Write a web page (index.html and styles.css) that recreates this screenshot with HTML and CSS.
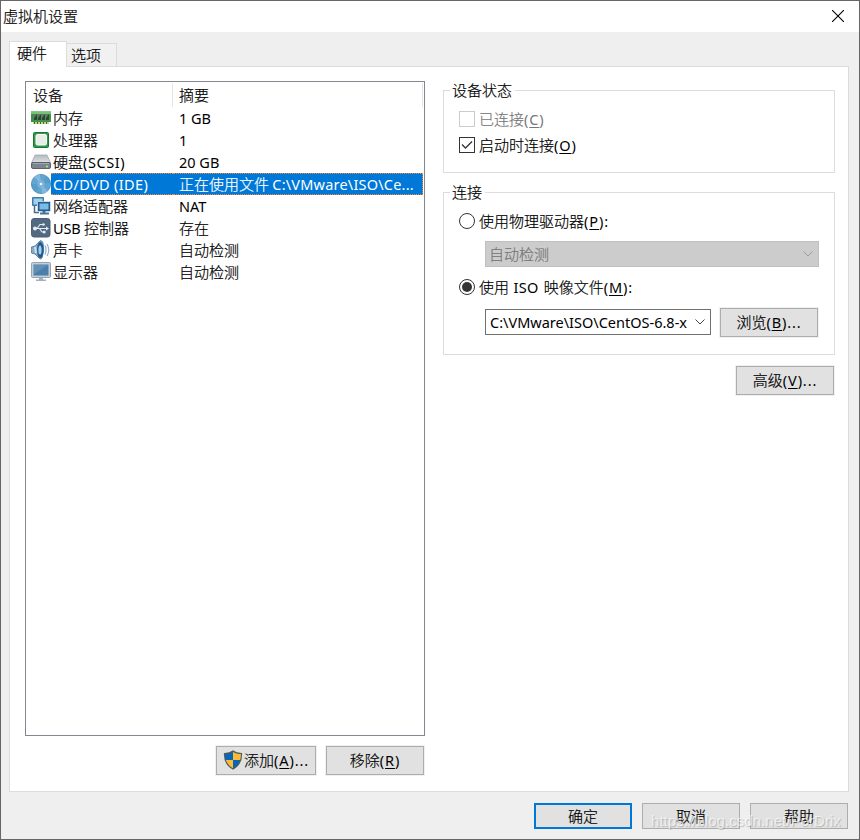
FILE: index.html
```
<!DOCTYPE html>
<html lang="zh-CN">
<head>
<meta charset="utf-8">
<title>虚拟机设置</title>
<link rel="stylesheet" href="styles.css">
</head>
<body>
<div class="window">
  <header class="titlebar">
    <span class="title">虚拟机设置</span>
    <svg class="close" width="12" height="12" viewBox="0 0 12 12"><path d="M0 0L12 12M12 0L0 12" stroke="#000" stroke-width="1.1"/></svg>
  </header>
  <nav class="tabs">
    <div class="tab active">硬件</div>
    <div class="tab">选项</div>
  </nav>
  <main class="panel">
    <section class="left">
      <div class="list">
        <div class="list-head"><span class="head-device">设备</span><span class="head-summary">摘要</span></div>
        <div class="row">
          <svg class="icon" viewBox="0 0 20 20"><path d="M0 3.500H20V14H18V16H2V14H0Z" fill="#3d9247"/><path d="M0 3.500H20V6H0Z" fill="#74c274"/><path d="M2 14H18V16H2Z" fill="#cfd08a"/><path d="M3.500 14V16M6.500 14V16M9.500 14V16M12.500 14V16M15.500 14V16" stroke="#28752d"/><path d="M3 6H6V12H3ZM7 6H10V12H7ZM11 6H14V12H11ZM15 6H18V12H15Z" fill="#35403c"/><path d="M3 6H6L3 10ZM7 6H10L7 10ZM11 6H14L11 10ZM15 6H18L15 10Z" fill="#66756c"/></svg>
          <span class="name">内存</span><span class="summary"><span class="lat">1 GB</span></span>
        </div>
        <div class="row">
          <svg class="icon" viewBox="0 0 20 20"><rect x="2.500" y="2.500" width="15" height="15" rx="1" fill="#32994a" stroke="#197735"/><rect x="5" y="4.500" width="10.500" height="10.500" rx="1.500" fill="#e9ece8" stroke="#fafffa"/></svg>
          <span class="name">处理器</span><span class="summary"><span class="lat">1</span></span>
        </div>
        <div class="row">
          <svg class="icon" viewBox="0 0 20 20"><defs><linearGradient id="disk" x2="0" y2="1"><stop stop-color="#b4bac0"/><stop offset="1" stop-color="#dfe2e5"/></linearGradient></defs><path d="M4 3H16L19.500 11H.5Z" fill="url(#disk)" stroke="#a1a8af" stroke-width=".8"/><rect x=".5" y="10.500" width="19" height="6" rx="1.500" fill="#7c848d" stroke="#59626b"/><path d="M2 11.500H18" stroke="#a0a7af"/><path d="M15 14.500H17" stroke="#a9f06b" stroke-width="1.500"/></svg>
          <span class="name">硬盘<span class="lat wide">(SCSI)</span></span><span class="summary"><span class="lat">20 GB</span></span>
        </div>
        <div class="row selected">
          <svg class="icon" viewBox="0 0 20 20"><circle cx="10" cy="10" r="9.600" fill="#62a5d2" stroke="#4489bc" stroke-width=".8"/><path d="M10 10L3 3A10 10 0 0 1 9 .5ZM10 10L17 17A10 10 0 0 1 11 19.500Z" fill="#8fc0df" opacity=".7"/><path d="M10 10L0 10A10 10 0 0 0 5 18ZM10 10L20 9A10 10 0 0 0 15 2Z" fill="#3c8ac0" opacity=".3"/><circle cx="10" cy="10" r="3.300" fill="#73afd6" stroke="#8fbfdd" stroke-width=".6"/><circle cx="10" cy="10" r="1.300" fill="#eef8fd"/></svg>
          <span class="name"><span class="lat device">CD/DVD (IDE)</span></span><span class="summary">正在使用文件 <span class="lat path-short">C:\VMware\ISO\Ce...</span></span>
        </div>
        <div class="row">
          <svg class="icon" viewBox="0 0 20 20"><rect x="1" y="1" width="12" height="9" rx="1" fill="#3d7cae"/><rect x="2.500" y="2.500" width="9" height="6" fill="#a1d1ed"/><path d="M3.500 10V16.500H8" fill="none" stroke="#476b87" stroke-width="1.500"/><rect x="6.500" y="5.500" width="13" height="10" rx="1" fill="#255d8f" stroke="#dfeefa" stroke-width=".7"/><rect x="8.500" y="7.500" width="9" height="6" fill="#79bce5"/><path d="M9 17.500H18" stroke="#477694" stroke-width="2"/><path d="M13 15V17" stroke="#477694" stroke-width="3"/></svg>
          <span class="name">网络适配器</span><span class="summary"><span class="lat">NAT</span></span>
        </div>
        <div class="row">
          <svg class="icon" viewBox="0 0 20 20"><rect x=".5" y=".5" width="18.500" height="18.500" rx="2.500" fill="#526982" stroke="#4a617b"/><path d="M3 10.500H16M6 10.500L9 6.500H12M8.500 10.500L11 14H13" fill="none" stroke="#e6edf3" stroke-width="1.100"/><circle cx="4" cy="10.500" r="2" fill="#e6edf3"/><path d="M15 8.500L18 10.500L15 12.500Z" fill="#e6edf3"/><circle cx="12.500" cy="6.500" r="1.300" fill="#e6edf3"/><rect x="12" y="12.800" width="2.500" height="2.500" fill="#e6edf3"/></svg>
          <span class="name"><span class="lat usb">USB</span> 控制器</span><span class="summary">存在</span>
        </div>
        <div class="row">
          <svg class="icon" viewBox="0 0 20 20"><path d="M.5 7L4 6L9 .8Q11 0 12 3Q14 10 11 18Q10 20 8 18L4 14L.5 13Q-.5 10 .5 7Z" fill="#88abc7" stroke="#456f93" stroke-width=".8"/><ellipse cx="9.300" cy="10" rx="3.200" ry="8" fill="#215a8d"/><ellipse cx="9" cy="10" rx="1.600" ry="4.500" fill="#9ed0ef"/><path d="M4 7L5 13" stroke="#cfe1ef" stroke-width="2"/><path d="M14 5.500Q16 10 14 14.500M16 4Q19.500 10 16 16" fill="none" stroke="#91b3cc" stroke-width="1.200"/></svg>
          <span class="name">声卡</span><span class="summary">自动检测</span>
        </div>
        <div class="row">
          <svg class="icon" viewBox="0 0 20 20"><rect x=".5" y=".5" width="19" height="15" rx="1" fill="#c2ced8" stroke="#93a5b3"/><rect x="2.500" y="2.500" width="15" height="11" fill="#4b7eaa"/><path d="M3 3H17L3 12Z" fill="#628fb5"/><path d="M8 16H12V17.500H15V19H5V17.500H8Z" fill="#a2b0bb"/></svg>
          <span class="name">显示器</span><span class="summary">自动检测</span>
        </div>
      </div>
      <div class="list-actions">
        <button class="btn add"><svg class="shield" width="20" height="20" viewBox="0 0 20 20"><defs><clipPath id="shield"><path d="M10 1Q13 3.500 18.500 3.500Q19 14 10 19Q1 14 1.500 3.500Q7 3.500 10 1Z"/></clipPath></defs><g clip-path="url(#shield)"><path d="M0 0H10V10H0ZM10 10H20V20H10Z" fill="#0865b7"/><path d="M10 0H20V10H10ZM0 10H10V20H0Z" fill="#fdbb35"/></g><path d="M10 1Q13 3.500 18.500 3.500Q19 14 10 19Q1 14 1.500 3.500Q7 3.500 10 1Z" fill="none" stroke="#505b60" stroke-width="1.200"/></svg><span class="label">添加<span class="lat key">(<u>A</u>)...</span></span></button>
        <button class="btn remove"><span class="label">移除<span class="lat key">(<u>R</u>)</span></span></button>
      </div>
    </section>
    <section class="right">
      <div class="group status">
        <span class="legend">设备状态</span>
        <label class="option disabled"><svg class="mark" viewBox="0 0 16 16"><rect x=".5" y=".5" width="15" height="15" fill="#fff" stroke="#ccc"/></svg>已连接<span class="lat key">(<u>C</u>)</span></label>
        <label class="option"><svg class="mark" viewBox="0 0 16 16"><rect x=".5" y=".5" width="15" height="15" fill="#fff" stroke="#333"/><path d="M3 7.500L6.500 11L13 4.500" fill="none" stroke="#333" stroke-width="1.300"/></svg>启动时连接<span class="lat key">(<u>O</u>)</span></label>
      </div>
      <div class="group connection">
        <span class="legend">连接</span>
        <label class="option"><svg class="mark" viewBox="0 0 16 16"><circle cx="8" cy="8" r="7.500" fill="#fff" stroke="#333"/></svg>使用物理驱动器<span class="lat key">(<u>P</u>):</span></label>
        <div class="combo disabled-combo"><span>自动检测</span><svg class="chevron" width="10" height="6" viewBox="0 0 10 6"><path d="M.5 .5L5 5L9.500 .5" fill="none" stroke="#9b9b9b"/></svg></div>
        <label class="option iso"><svg class="mark" viewBox="0 0 16 16"><circle cx="8" cy="8" r="7.500" fill="#fff" stroke="#333"/><circle cx="8" cy="8" r="5" fill="#333"/></svg>使用<span class="lat iso-word">ISO</span>映像文件<span class="lat key">(<u>M</u>):</span></label>
        <div class="file-row">
          <div class="combo file"><span class="lat path">C:\VMware\ISO\CentOS-6.8-x</span><svg class="chevron" width="10" height="6" viewBox="0 0 10 6"><path d="M.5 .5L5 5L9.500 .5" fill="none" stroke="#444"/></svg></div>
          <button class="btn"><span class="label">浏览<span class="lat key">(<u>B</u>)...</span></span></button>
        </div>
      </div>
      <button class="btn advanced"><span class="label">高级<span class="lat key">(<u>V</u>)...</span></span></button>
    </section>
  </main>
  <footer class="footer">
    <button class="btn default">确定</button>
    <button class="btn">取消</button>
    <button class="btn">帮助</button>
  </footer>
  <span class="watermark">https://blog.csdn.net/PerDrix</span>
</div>
</body>
</html>
```
FILE: styles.css
```
* { box-sizing: border-box; }
body { margin: 0; font: 15px/22px "Noto Sans CJK SC", sans-serif; font-weight: 300; color: #000; -webkit-text-stroke: .2px; }
.window { position: relative; width: 860px; height: 840px; border: 1px solid #666; background: #efefef; display: flex; flex-direction: column; overflow: hidden; }
.titlebar { height: 31px; flex: none; background: #fff; display: flex; align-items: center; justify-content: space-between; padding: 0 15px 2px 2px; }
.lat { font-family: "Noto Sans", sans-serif; font-size: 14.5px; font-weight: 400; -webkit-text-stroke: 0; }
.wide { letter-spacing: .6px; }
.device { letter-spacing: .35px; }
.usb { letter-spacing: -.1px; }
.path-short { letter-spacing: .2px; }
.key { letter-spacing: .9px; }
.iso-word { letter-spacing: .3px; margin: 0 5px 0 4.5px; }
u { text-decoration: underline; text-decoration-thickness: 1px; text-underline-offset: 2px; }
.tabs { height: 34px; flex: none; display: flex; align-items: flex-end; padding-left: 8px; }
.tab { position: relative; height: 23px; width: 50px; border: 1px solid #dcdcdc; border-width: 1px 1px 0 0; padding-left: 4px; line-height: 21px; background: #f1f1f1; }
.tab.active { height: 26px; width: 58px; margin-bottom: -1px; border-left-width: 1px; background: #fff; padding-left: 7px; z-index: 1; }
.panel { width: 840px; height: 726px; flex: none; margin-left: 8px; border: 1px solid #dcdcdc; background: #fff; display: flex; padding: 14px 13px 0 15px; gap: 18px; }
.left { width: 400px; }
.list { height: 655px; border: 1px solid #828790; padding: 1px 1px 0 0; }
.list-head { height: 24px; display: flex; line-height: 23px; border-right: 1px solid #e5e5e5; }
.head-device { width: 147px; padding-left: 7px; border-right: 1px solid #e5e5e5; }
.head-summary { padding-left: 6px; }
.row { height: 22px; display: flex; padding-left: 5px; white-space: nowrap; }
.icon { width: 20px; height: 20px; margin-top: 1px; flex: none; }
.name { width: 122px; padding-left: 2px; }
.summary { flex: 1; padding-left: 6px; }
.selected .name, .selected .summary { background: #0078d7; color: #fff; border: dotted #ff8728; border-width: 1px 0; line-height: 20px; }
.selected .summary { border-right-width: 1px; }
.list-actions { display: flex; justify-content: flex-end; gap: 10px; margin: 10px 1px 0 0; }
.btn { width: 98px; height: 29px; padding: 0 0 2px; border: 1px solid #adadad; background: #e1e1e1; font: inherit; color: #000; display: flex; align-items: center; justify-content: center; box-shadow: 0 0 0 1px #f0f0f0; flex: none; }
.add { width: 100px; }
.shield { margin-right: 1px; }
.right { width: 392px; padding-top: 9px; display: flex; flex-direction: column; }
.group { position: relative; border: 1px solid #dcdcdc; padding-left: 15px; }
.status { height: 83px; padding-top: 17px; }
.connection { height: 163px; margin-top: 19px; padding-top: 17px; }
.legend { position: absolute; left: 6px; top: -12px; background: #fff; padding: 0 3px 0 2px; }
.option { height: 22px; display: flex; align-items: center; }
.option + .option { margin-top: 4px; }
.mark { width: 16px; height: 16px; margin-right: 4px; flex: none; }
.disabled { color: #777; }
.combo { width: 226px; height: 26px; border: 1px solid #707070; background: #fff; display: flex; align-items: center; justify-content: space-between; padding: 0 5px 0 4px; }
.disabled-combo { width: 334px; margin: 9px 0 0 26px; padding-left: 3px; border-color: #bfbfbf; background: #ccc; color: #777; }
.iso { margin-top: 9px; }
.file-row { display: flex; align-items: flex-start; gap: 9px; margin: 10px 0 0 26px; }
.file { margin-top: 1px; }
.file .lat { margin-top: -1px; }
.advanced { margin: 11px 1px 0 0; align-self: flex-end; }
.footer { display: flex; justify-content: flex-end; gap: 10px; padding: 11px 11px 0 0; }
.footer .btn { height: 26px; padding-bottom: 1px; box-shadow: none; }
.footer .default { border: 2px solid #0078d7; }
.watermark { position: absolute; left: 650px; top: 809px; font: 15px/22px "Liberation Sans", sans-serif; color: rgba(255, 255, 255, .65); -webkit-text-stroke: 0; letter-spacing: .05px; text-shadow: 1px 1px 1px rgba(0, 0, 0, .2); white-space: nowrap; }
```
